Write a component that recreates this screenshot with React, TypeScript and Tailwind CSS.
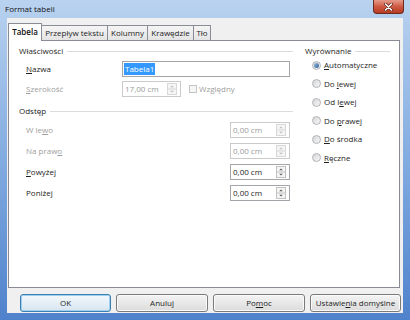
import React from 'react';

const sectionLine = "flex-1 h-px bg-[#dcdcdc]";

function Heading({ label }: { label: string }) {
  return (
    <div className="flex items-center h-[12px] gap-[4px] text-[#1e1e1e]">
      <span>{label}</span>
      <div className={sectionLine} />
    </div>
  );
}

function SpinArrows({ disabled }: { disabled?: boolean }) {
  const stroke = disabled ? '#d8d8d8' : '#c2c2c2';
  const arrow = disabled ? '#bcbcbc' : '#5a5a5a';
  return (
    <svg width="10" height="12" viewBox="0 0 10 12" className="shrink-0">
      <rect x="0.5" y="0.5" width="9" height="11" fill="#f5f5f5" stroke={stroke} />
      <line x1="0.5" y1="6" x2="9.5" y2="6" stroke={stroke} />
      <path d="M3.2 4.3 L5 2.6 L6.8 4.3Z" fill={arrow} />
      <path d="M3.2 7.7 L5 9.4 L6.8 7.7Z" fill={arrow} />
    </svg>
  );
}

function SpinBox({ value, disabled, className }: { value: string; disabled?: boolean; className: string }) {
  return (
    <div
      className={
        'flex items-center bg-white border ' +
        (disabled ? 'border-[#cacaca] text-[#9a9a9a] ' : 'border-[#a3a5ab] text-[#1e1e1e] ') +
        className
      }
    >
      <span className="flex-1 pl-[2px]">{value}</span>
      <div className="mr-[3px] flex">
        <SpinArrows disabled={disabled} />
      </div>
    </div>
  );
}

function Label({ children, disabled, className }: { children: React.ReactNode; disabled?: boolean; className?: string }) {
  return (
    <span className={(disabled ? 'text-[#a0a0a0] ' : 'text-[#1e1e1e] ') + (className ?? '')}>{children}</span>
  );
}

const spacingRows = [
  { pre: 'W le', u: 'w', post: 'o', disabled: true },
  { pre: 'Na praw', u: 'o', post: '', disabled: true },
  { pre: '', u: 'P', post: 'owyżej', disabled: false },
  { pre: 'Poniże', u: 'j', post: '', disabled: false },
];

const radios = [
  { pre: '', u: 'A', post: 'utomatyczne', checked: true },
  { pre: 'Do ', u: 'l', post: 'ewej' },
  { pre: 'Od l', u: 'e', post: 'wej' },
  { pre: 'Do ', u: 'p', post: 'rawej' },
  { pre: '', u: 'D', post: 'o środka' },
  { pre: '', u: 'R', post: 'ęczne' },
];

const tabs = [
  { label: 'Tabela', w: 'w-[34px]', active: true },
  { label: 'Przepływ tekstu', w: 'w-[67px]' },
  { label: 'Kolumny', w: 'w-[41px]' },
  { label: 'Krawędzie', w: 'w-[47px]' },
  { label: 'Tło', w: 'w-[18px]' },
];

const buttons = [
  { pre: 'OK', u: '', post: '', primary: true, w: 'w-[91px]' },
  { pre: 'Anuluj', u: '', post: '', w: 'w-[92px]' },
  { pre: 'Po', u: 'm', post: 'oc', w: 'w-[92px]' },
  { pre: 'Ustawie', u: 'n', post: 'ia domyślne', w: 'w-[91px]' },
];

export default function App() {
  return (
    <div className="w-[410px] h-[320px] flex flex-col bg-linear-to-b from-[#b9d2ef] via-[#82abe0] to-[#4f82cc] font-['Open_Sans',sans-serif] text-[8px] leading-none overflow-hidden">
      {/* title bar */}
      <div className="h-[18px] flex justify-between items-start">
        <span className="pl-[5px] pt-[5px] text-[#111]">Format tabeli</span>
        <div className="mr-[6px] w-[31px] h-[14px] rounded-b-[4px] border border-t-0 border-[#6b2a1e] bg-linear-to-b from-[#e49a8a] via-[#cf5a44] to-[#b83a22] flex items-center justify-center">
          <svg width="9" height="8" viewBox="0 0 9 8">
            <path d="M1.5 1 L7.5 7 M7.5 1 L1.5 7" stroke="#5a2418" strokeWidth="3" strokeLinecap="round" />
            <path d="M1.5 1 L7.5 7 M7.5 1 L1.5 7" stroke="#ffffff" strokeWidth="1.6" strokeLinecap="round" />
          </svg>
        </div>
      </div>

      {/* dialog body */}
      <div className="mx-[7px] h-[295px] bg-[#f0f0f0] flex flex-col pt-[5px]">
        {/* tabs */}
        <div className="h-[18px] flex items-end pl-[1px] -mb-px relative z-10">
          {tabs.map((t, i) => (
            <div
              key={t.label}
              className={
                t.w +
                ' flex items-center justify-center border border-[#898c95] ' +
                (i > 0 ? '-ml-px ' : '') +
                (t.active
                  ? 'h-[18px] bg-white border-b-0 relative z-10 font-semibold text-[#111] pb-[1px]'
                  : 'h-[16px] bg-linear-to-b from-[#f5f5f5] to-[#e4e4e4] text-[#1e1e1e]')
              }
            >
              {t.label}
            </div>
          ))}
        </div>

        {/* page */}
        <div className="ml-[1px] mr-[3px] h-[248px] bg-white border border-[#898c95] flex">
          {/* left column */}
          <div className="ml-[10px] w-[274px] pt-[4px] flex flex-col">
            <Heading label="Właściwości" />
            <div className="mt-[4px] h-[16px] flex items-center pl-[7px] pr-[3px]">
              <Label className="w-[96px]">
                <span className="underline">N</span>azwa
              </Label>
              <div className="flex-1 h-[16px] border border-[#a3a5ab] flex items-center pl-[1px]">
                <span className="bg-[#3399ff] text-white px-[1px] py-[2px]">Tabela1</span>
              </div>
            </div>
            <div className="mt-[4px] h-[16px] flex items-center pl-[7px]">
              <Label disabled className="w-[96px]">
                <span className="underline">S</span>zerokość
              </Label>
              <SpinBox value="17,00 cm" disabled className="w-[59px] h-[16px]" />
              <div className="ml-[8px] w-[8px] h-[8px] border border-[#c4c4c4] bg-[#f6f6f6]" />
              <Label disabled className="ml-[2px]">Względny</Label>
            </div>
            <div className="mt-[8px]">
              <Heading label="Odstęp" />
            </div>
            {spacingRows.map((r) => (
              <div key={r.pre + r.u} className="mt-[5px] h-[16px] flex items-center pl-[7px] pr-[3px]">
                <Label disabled={r.disabled} className="flex-1">
                  {r.pre}
                  <span className="underline">{r.u}</span>
                  {r.post}
                </Label>
                <SpinBox value="0,00 cm" disabled={r.disabled} className="w-[60px] h-[16px]" />
              </div>
            ))}
          </div>

          {/* right column */}
          <div className="ml-[12px] w-[85px] pt-[4px] flex flex-col">
            <Heading label="Wyrównanie" />
            <div className="-mt-px flex flex-col">
              {radios.map((r) => (
                <div key={r.post} className="h-[18.5px] flex items-center pl-[7px]">
                  <div className="w-[9px] h-[9px] rounded-full border border-[#b0b3b8] bg-linear-to-br from-[#d6d6d6] to-[#f8f8f8] flex items-center justify-center">
                    {r.checked && <div className="w-[5px] h-[5px] rounded-full bg-linear-to-br from-[#9cc2e8] to-[#2a5d94]" />}
                  </div>
                  <span className="ml-[3px] text-[#1e1e1e]">
                    {r.pre}
                    <span className="underline">{r.u}</span>
                    {r.post}
                  </span>
                </div>
              ))}
            </div>
          </div>
        </div>

        {/* buttons */}
        <div className="mt-[6px] pl-[13px] flex gap-[5px]">
          {buttons.map((b) => (
            <div
              key={b.pre}
              className={
                b.w +
                ' h-[18px] rounded-[3px] border flex items-center justify-center text-[#1e1e1e] ' +
                (b.primary
                  ? 'border-[#3c7fb1] bg-linear-to-b from-[#f3f8fc] to-[#d8e6f1] shadow-[inset_0_0_0_1px_#9fd0f0]'
                  : 'border-[#7a7a7a] bg-linear-to-b from-[#f4f4f4] to-[#dcdcdc] shadow-[inset_0_0_0_1px_#fbfbfb]')
              }
            >
              {b.pre}
              {b.u && <span className="underline">{b.u}</span>}
              {b.post}
            </div>
          ))}
        </div>
      </div>
    </div>
  );
}
